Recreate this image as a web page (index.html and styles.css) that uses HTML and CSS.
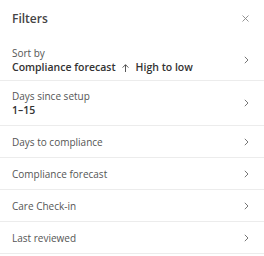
FILE: index.html
```html
<!DOCTYPE html>
<html>
<head>
<meta charset="utf-8">
<link rel="stylesheet" href="styles.css">
</head>
<body>
<div class="panel">
  <div class="header">
    <span class="title">Filters</span>
    <svg class="close" width="7" height="7" viewBox="0 0 7 7"><path d="M0.5 0.5L6.5 6.5M6.5 0.5L0.5 6.5" stroke="#888" stroke-width="0.9" fill="none"/></svg>
  </div>
  <div class="row two">
    <div class="text">
      <div class="label">Sort by</div>
      <div class="value">Compliance forecast<svg class="arrow" width="7" height="8" viewBox="0 0 7 8"><path d="M3.5 8V0.8M0.6 3.6L3.5 0.7L6.4 3.6" stroke="#444" stroke-width="0.9" fill="none"/></svg>High to low</div>
    </div>
    <svg class="chev" width="5" height="8" viewBox="0 0 5 8"><path d="M0.8 0.8L4 4L0.8 7.2" stroke="#666" stroke-width="0.9" fill="none"/></svg>
  </div>
  <div class="row two">
    <div class="text">
      <div class="label">Days since setup</div>
      <div class="value">1–15</div>
    </div>
    <svg class="chev" width="5" height="8" viewBox="0 0 5 8"><path d="M0.8 0.8L4 4L0.8 7.2" stroke="#666" stroke-width="0.9" fill="none"/></svg>
  </div>
  <div class="row">
    <div class="label">Days to compliance</div>
    <svg class="chev" width="5" height="8" viewBox="0 0 5 8"><path d="M0.8 0.8L4 4L0.8 7.2" stroke="#666" stroke-width="0.9" fill="none"/></svg>
  </div>
  <div class="row">
    <div class="label">Compliance forecast</div>
    <svg class="chev" width="5" height="8" viewBox="0 0 5 8"><path d="M0.8 0.8L4 4L0.8 7.2" stroke="#666" stroke-width="0.9" fill="none"/></svg>
  </div>
  <div class="row">
    <div class="label">Care Check-in</div>
    <svg class="chev" width="5" height="8" viewBox="0 0 5 8"><path d="M0.8 0.8L4 4L0.8 7.2" stroke="#666" stroke-width="0.9" fill="none"/></svg>
  </div>
  <div class="row">
    <div class="label">Last reviewed</div>
    <svg class="chev" width="5" height="8" viewBox="0 0 5 8"><path d="M0.8 0.8L4 4L0.8 7.2" stroke="#666" stroke-width="0.9" fill="none"/></svg>
  </div>
</div>
</body>
</html>
```
FILE: styles.css
```css
html, body { margin: 0; padding: 0; background: #fff; }
body { font-family: "Open Sans", sans-serif; color: #444; }
.panel { width: 264px; }
.header {
  height: 40px;
  display: flex;
  align-items: center;
  justify-content: space-between;
  padding: 0 15px 4px 12px;
  box-sizing: border-box;
}
.title { font-size: 12px; font-weight: 600; color: #444; }
.close { display: block; }
.row {
  display: flex;
  align-items: center;
  justify-content: space-between;
  padding: 0 15px 0 12px;
  height: 31px;
  border-bottom: 1px solid #ececec;
  font-size: 10px;
}
.row.two { height: 40px; }
.row.two + .row.two { height: 44px; }
.label { color: #555; line-height: 14px; }
.value { color: #333; font-weight: 600; font-size: 10.5px; line-height: 14px; }
.arrow { display: inline-block; vertical-align: -1px; margin: 0 7px 0 6px; }
.chev { display: block; flex: none; }
```
